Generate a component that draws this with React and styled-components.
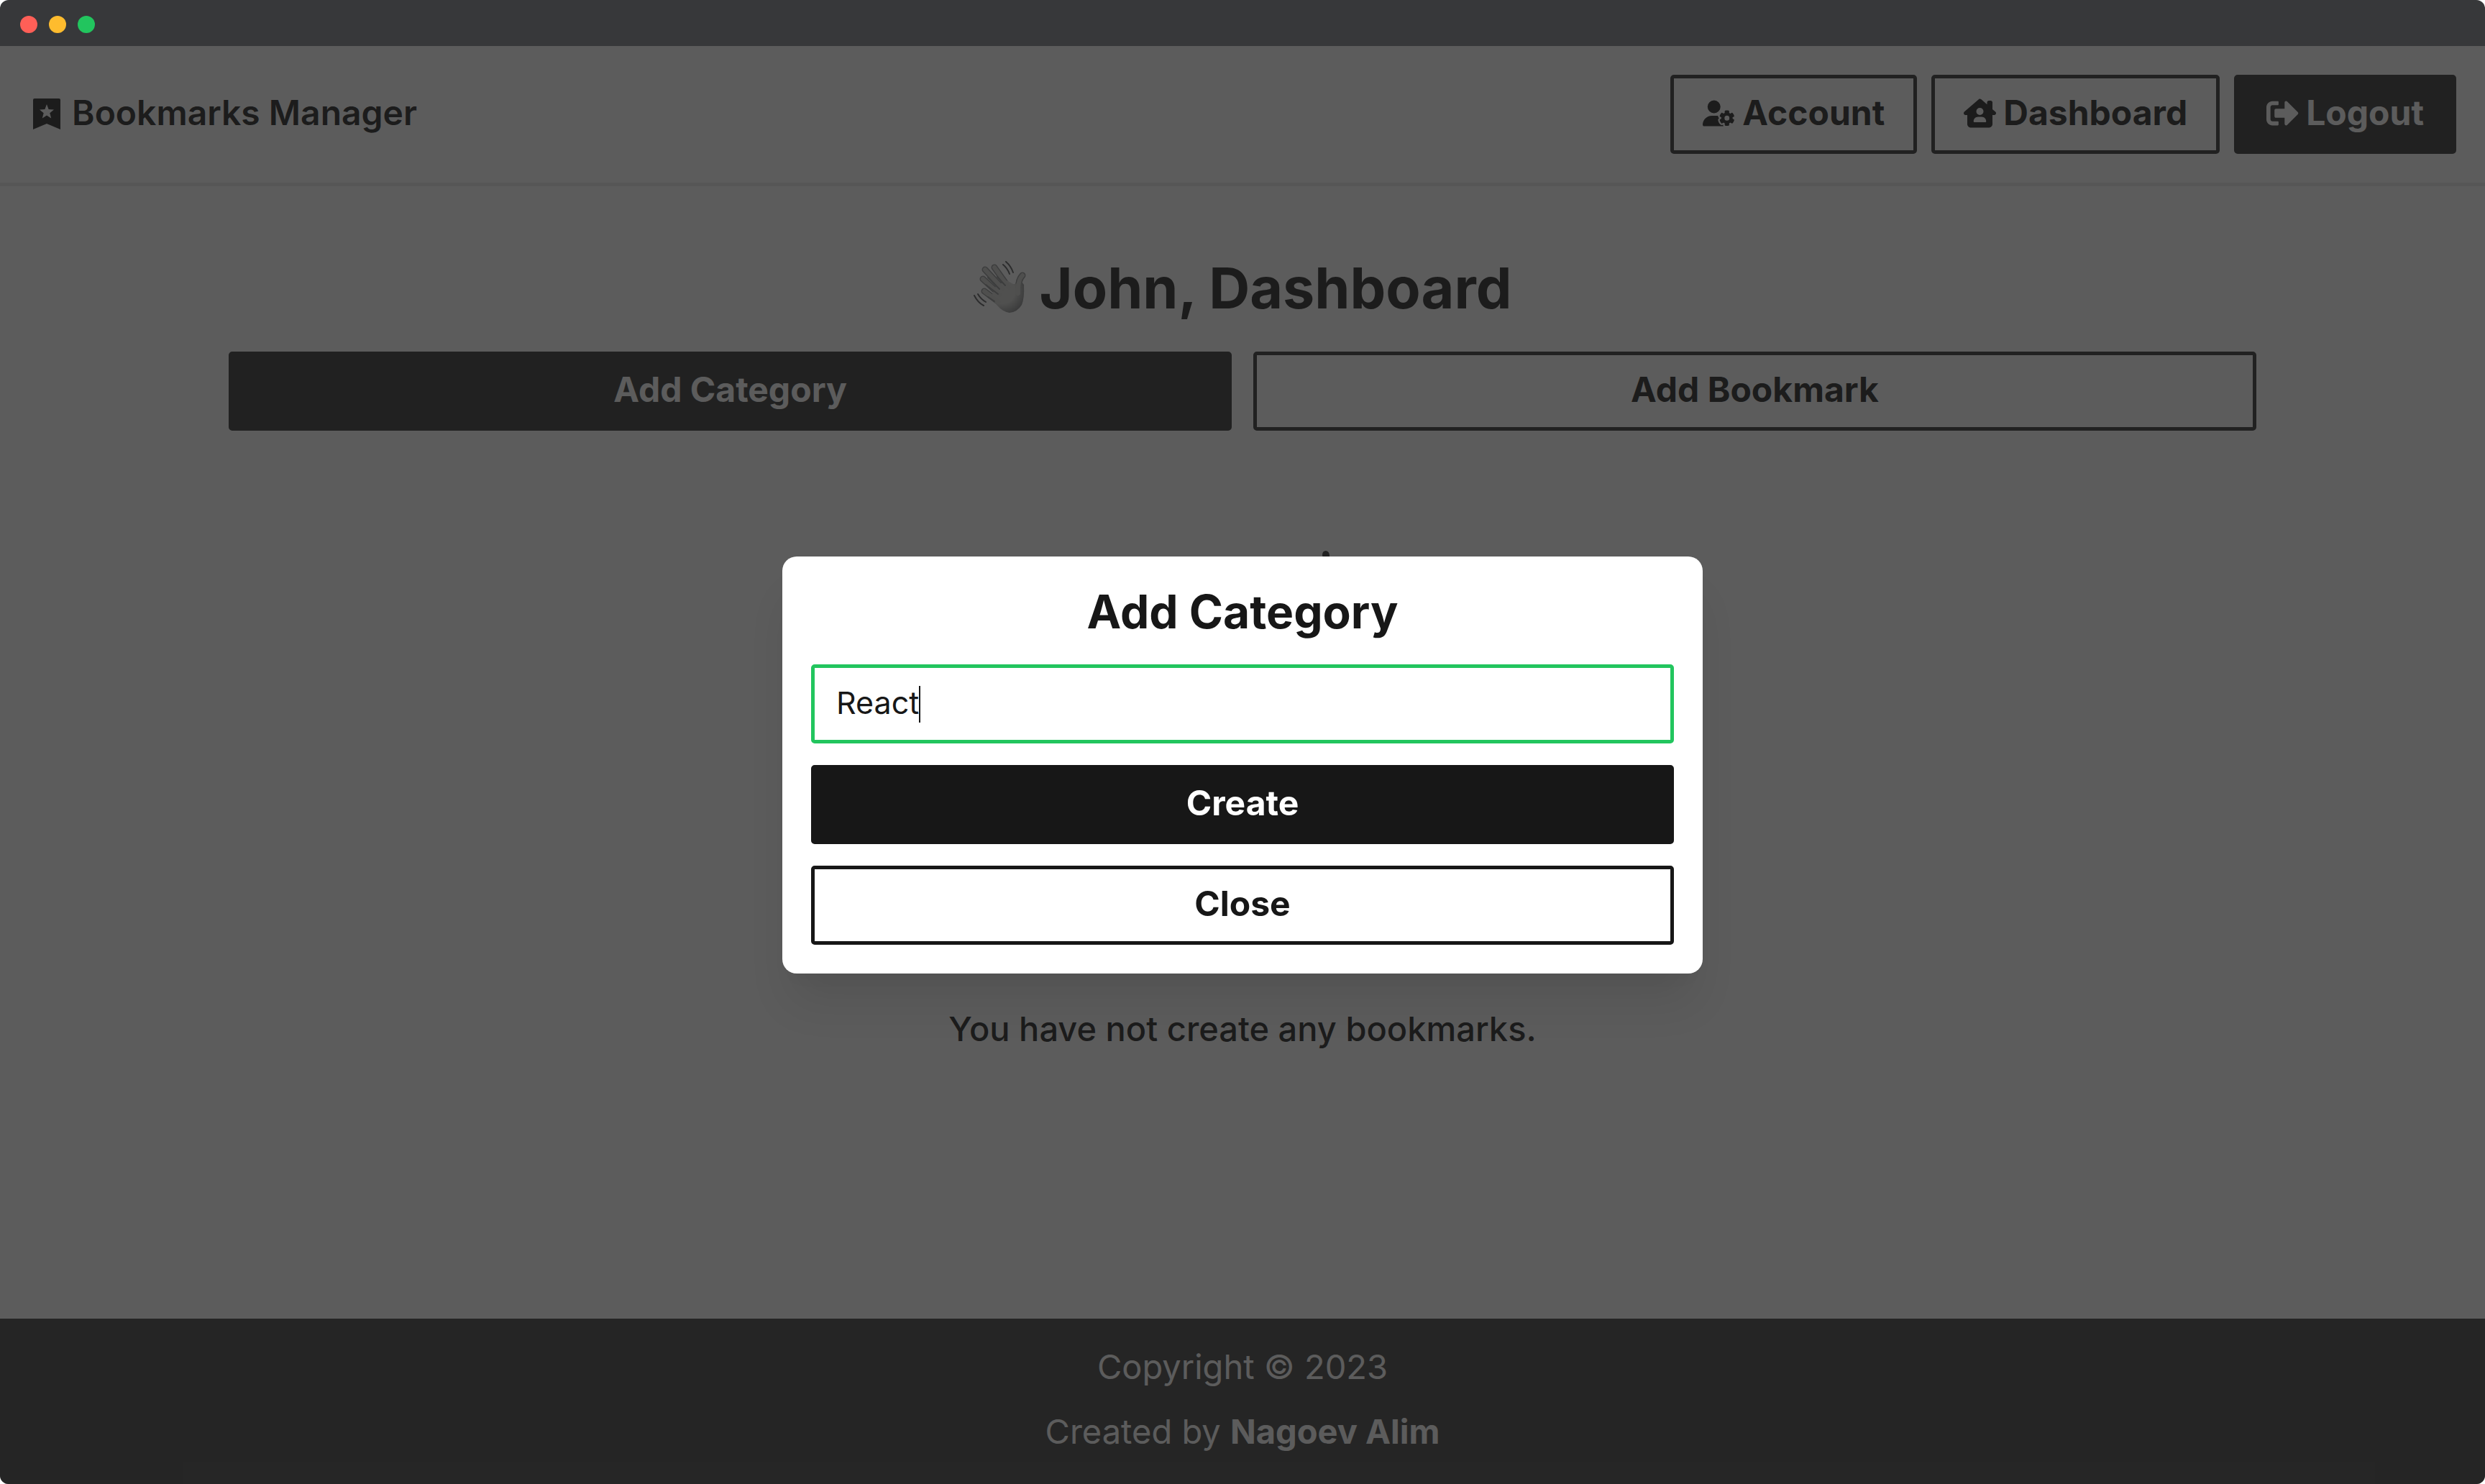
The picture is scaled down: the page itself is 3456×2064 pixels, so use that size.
import React, { useState } from "react";
import styled, { createGlobalStyle, css } from "styled-components";
import { FaUserGear, FaHouseChimneyUser } from "react-icons/fa6";
import { FaSignOutAlt } from "react-icons/fa";

const GlobalStyle = createGlobalStyle`
  *, *::before, *::after { box-sizing: border-box; }
  html, body { margin: 0; background: #ffffff; }
  body, button, input { font-family: Inter, "Liberation Sans", sans-serif; }
  h1, h2, p { margin: 0; }
`;

const Window = styled.div`
  display: flex;
  flex-direction: column;
  min-height: 100vh;
  border-radius: 12px;
  overflow: hidden;
  background: #ffffff;
`;

const TitleBar = styled.div`
  display: flex;
  align-items: center;
  gap: 16px;
  height: 64px;
  padding: 4px 28px 0;
  background: #37383a;
`;

const Light = styled.span`
  width: 24px;
  height: 24px;
  border-radius: 50%;
  background: ${(p) => p.$color};
`;

const Page = styled.div`
  position: relative;
  flex: 1;
  display: flex;
  flex-direction: column;
  color: #000000;
`;

const Header = styled.header`
  display: flex;
  align-items: center;
  justify-content: space-between;
  padding: 40px;
  border-bottom: 5px solid #e5e5e5;
`;

const Brand = styled.a`
  display: flex;
  align-items: center;
  gap: 10px;
  padding-bottom: 4px;
  color: inherit;
  text-decoration: none;
  font-size: 48px;
  line-height: 70px;
  font-weight: 600;
`;

const Nav = styled.nav`
  display: flex;
  gap: 20px;
`;

const buttonLook = css`
  display: flex;
  align-items: center;
  justify-content: center;
  gap: 10px;
  padding: 13px 40px 17px;
  border: 5px solid #171717;
  border-radius: 5px;
  font-size: 48px;
  line-height: 70px;
  font-weight: 700;
  text-decoration: none;
  cursor: pointer;
  background: ${(p) => (p.$filled ? "#171717" : "transparent")};
  color: ${(p) => (p.$filled ? "#ffffff" : "inherit")};

  svg { width: 45px; height: 45px; flex: none; }
`;

const Button = styled.button`${buttonLook}`;
const NavLink = styled.a`${buttonLook}`;

const Main = styled.main`
  flex: 1;
  display: flex;
  flex-direction: column;
  width: 100%;
  max-width: 2900px;
  margin: 0 auto;
  padding: 90px 40px;
`;

const Greeting = styled.h1`
  display: flex;
  align-items: center;
  justify-content: center;
  gap: 18px;
  font-size: 79px;
  line-height: 102px;
  font-weight: 700;
`;

const Actions = styled.div`
  display: grid;
  grid-template-columns: 1fr 1fr;
  gap: 30px;
  margin-top: 38px;
`;

const EmptyState = styled.section`
  display: flex;
  flex-direction: column;
  align-items: center;
  gap: 30px;
  margin-top: 167px;
  font-size: 47px;
  line-height: 70px;
  font-weight: 500;
`;

const Footer = styled.footer`
  display: flex;
  flex-direction: column;
  align-items: center;
  gap: 20px;
  padding: 32px 40px 38px;
  background: #262626;
  color: #ffffff;
  font-size: 47px;
  line-height: 70px;
`;

const AuthorLink = styled.a`
  color: inherit;
  font-weight: 700;
  text-decoration: none;
`;

const Overlay = styled.div`
  position: absolute;
  inset: 0;
  display: flex;
  align-items: center;
  justify-content: center;
  background: rgba(38, 38, 38, 0.75);
`;

const Dialog = styled.form`
  display: flex;
  flex-direction: column;
  gap: 30px;
  width: 1280px;
  max-width: 90%;
  padding: 40px;
  border-radius: 20px;
  background: #ffffff;
  color: #171717;
  box-shadow: 0 50px 62px -12px rgba(0, 0, 0, 0.09), 0 20px 25px -15px rgba(0, 0, 0, 0.03);
`;

const DialogTitle = styled.h2`
  padding-bottom: 6px;
  font-size: 64px;
  line-height: 74px;
  font-weight: 700;
  text-align: center;
`;

const FieldBox = styled.label`
  display: flex;
  align-items: center;
  height: 110px;
  padding: 0 30px;
  border: 5px solid #22c55e;
  border-radius: 5px;
  background: #ffffff;
  cursor: text;
`;

const FieldInput = styled.input`
  field-sizing: content;
  min-width: 2px;
  height: 100px;
  padding: 0 0 4px;
  border: 0;
  outline: none;
  background: transparent;
  color: inherit;
  caret-color: transparent;
  font-size: 43px;
`;

const Caret = styled.span`
  width: 2px;
  height: 51px;
  background: #171717;
`;

function BookmarkIcon() {
  return (
    <svg width="50" height="50" viewBox="0 -2 50 50" aria-hidden="true">
      <path
        fill="currentColor"
        fillRule="evenodd"
        d="M8 3H42Q44 3 44 5V46L25 38L6 46V5Q6 3 8 3ZM25 11L22.400 18L15 18.500L20.700 23.300L18.800 30.500L25 26.500L31.200 30.500L29.300 23.300L35 18.500L27.600 18Z"
      />
    </svg>
  );
}

const FINGERS =
  "M25 21L50 48M38 18L58 46M22 34L46 56M24 51L44 66M77 29Q70 36 71 54";

function WavingHand() {
  return (
    <svg width="74" height="74" viewBox="9 9 74 74" fill="none" strokeLinecap="round" aria-hidden="true">
      <defs>
        <radialGradient id="palm" cx="0.35" cy="0.35" r="0.75">
          <stop offset="0.5" stopColor="#d0d0cc" />
          <stop offset="1" stopColor="#707274" />
        </radialGradient>
      </defs>
      <path d={FINGERS} stroke="#808284" strokeWidth="9" />
      <path
        d="M40 44L55 36L64 41Q70 42 73 34L79 42Q80 60 76 70Q70 80 59 81Q50 80 42 71L33 60Z"
        fill="url(#palm)"
      />
      <path d={FINGERS} stroke="#cbcbc8" strokeWidth="6" />
      <path d="M29 32L45 48M42 31L53 43M26 42L43 55M29 59L38 65" stroke="#808284" strokeWidth="2" />
      <path
        d="M50 14Q56 19 59 27M54 10Q61 16 64 25M10 57Q15 67 23 71M15 55Q19 62 26 66"
        stroke="#404244"
        strokeWidth="2"
      />
    </svg>
  );
}

function EmptyArt() {
  return (
    <svg width="600" height="600" viewBox="0 0 600 600" aria-hidden="true">
      <path d="M411 6Q411 0 416 0Q421 1 421 7V16H413Z" fill="#171717" />
    </svg>
  );
}

export default function App() {
  const [name, setName] = useState("React");
  return (
    <>
      <GlobalStyle />
      <Window>
        <TitleBar>
          <Light $color="#ff5f57" />
          <Light $color="#febc2e" />
          <Light $color="#22c55e" />
        </TitleBar>
        <Page>
          <Header>
            <Brand href="#"><BookmarkIcon />Bookmarks Manager</Brand>
            <Nav>
              <NavLink href="#account"><FaUserGear />Account</NavLink>
              <NavLink href="#dashboard"><FaHouseChimneyUser />Dashboard</NavLink>
              <Button type="button" $filled><FaSignOutAlt />Logout</Button>
            </Nav>
          </Header>
          <Main>
            <Greeting><WavingHand />John, Dashboard</Greeting>
            <Actions>
              <Button type="button" $filled>Add Category</Button>
              <Button type="button">Add Bookmark</Button>
            </Actions>
            <EmptyState>
              <EmptyArt />
              <p>You have not create any bookmarks.</p>
            </EmptyState>
          </Main>
          <Footer>
            <p>Copyright © 2023</p>
            <p>Created by <AuthorLink href="#author">Nagoev Alim</AuthorLink></p>
          </Footer>
          <Overlay>
            <Dialog role="dialog" aria-labelledby="dialog-title" onSubmit={(e) => e.preventDefault()}>
              <DialogTitle id="dialog-title">Add Category</DialogTitle>
              <FieldBox>
                <FieldInput
                  aria-label="Category name"
                  value={name}
                  onChange={(e) => setName(e.target.value)}
                  autoFocus
                />
                <Caret />
              </FieldBox>
              <Button type="submit" $filled>Create</Button>
              <Button type="button">Close</Button>
            </Dialog>
          </Overlay>
        </Page>
      </Window>
    </>
  );
}
